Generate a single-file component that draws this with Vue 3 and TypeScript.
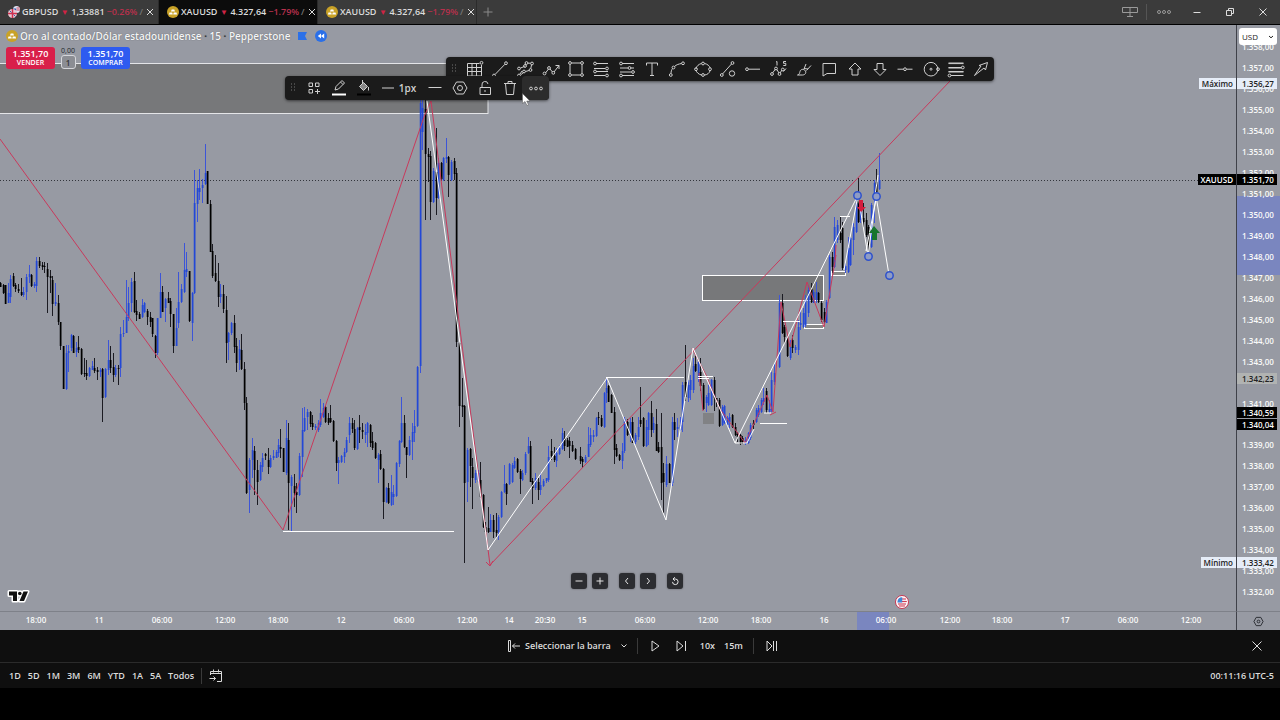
<script setup lang="ts">
interface Tab { symbol: string; price: string; change: string; kind: 'gbp' | 'gold'; active: boolean }
interface Candle { x: number; high: number; top: number; bottom: number; low: number; up: boolean }
interface Segment { x: number; y: number; rows: string }

const tabs: Tab[] = [
  { symbol: 'GBPUSD', price: '1,33881', change: '−0.26%', kind: 'gbp', active: false },
  { symbol: 'XAUUSD', price: '4.327,64', change: '−1.79%', kind: 'gold', active: true },
  { symbol: 'XAUUSD', price: '4.327,64', change: '−1.79%', kind: 'gold', active: false },
]

const ring = (x: number, y: number, r = 1.4): string =>
  `M${x - r} ${y}a${r} ${r} 0 1 0 ${2 * r} 0a${r} ${r} 0 1 0 ${-2 * r} 0`

const drawingTools: { name: string; d: string }[] = [
  { name: 'Cuadrícula', d: 'M1.5 3.5h12M1.5 7.5h14M1.5 11.5h14M1.5 16h14M1.5 3.5V16M6 3.5V16M10.5 3.5V16M15.5 5v11' + ring(15.5, 2.8) },
  { name: 'Línea de tendencia', d: 'M4 14.5L14 4.2' + ring(3, 15.5) + ring(15, 3.2) },
  { name: 'Polilínea', d: 'M4 14l2-3M4.500 8l4-1.500M9.500 5l.5-1M12 3.200h2.500M15.500 5l-.7 3.500M13 10.500l-3.500 1M7.500 12.500l-3 2.500' + ring(3, 15.5) + ring(3, 8.500) + ring(10.5, 3) + ring(16, 3.5) + ring(14.500, 10) + ring(8, 11.500) + ring(9, 6) },
  { name: 'Trayectoria', d: 'M3.500 13l3-4M8 9l2.500 3M12 12l5-6.500M13.500 5.500H17V9' + ring(2.5, 13.5) + ring(7, 8) + ring(11.300, 12.800) },
  { name: 'Rectángulo', d: 'M4.500 3h9M4.500 15h9M3 4.500v9M15 4.500v9' + ring(3, 3) + ring(15, 3) + ring(3, 15) + ring(15, 15) },
  { name: 'Retroceso de Fibonacci', d: 'M4 3.500h12M2 8.500h11M4 11.500h12M2 15.500h11' + ring(3, 3.5) + ring(15, 8.5) + ring(3, 11.5) + ring(15, 15.5) },
  { name: 'Extensión de Fibonacci', d: 'M4 3.500h12M2 8h8M13 8h3M2 12h11M4 15.500h12' + ring(3, 3.5) + ring(11.5, 8) + ring(15, 12) + ring(3, 15.5) },
  { name: 'Texto', d: 'M3.500 5.500V3h11v2.500M9 3v12.500M7 15.500h4' },
  { name: 'Curva', d: 'M3 13.500c0-2 .5-3.500 1.500-5M6.500 6.500C8.500 4.500 11 4 13.500 3.500' + ring(2.8, 15) + ring(5.5, 7.500) + ring(15, 3.300) },
  { name: 'Elipse', d: 'M1.800 9C2.500 6 5 4 7.500 3.500M10.500 3.500C13.500 4 15.500 6 16.200 8M16.200 10.500C15.500 13 13 15 10.500 15M7.500 15C5 14.500 2.500 12.500 1.800 10' + ring(9, 3.500) + ring(9, 15) + ring(2, 9.200) + ring(16, 9.200) },
  { name: 'Línea y objeto', d: 'M3.500 14L12.500 4' + ring(2.8, 15) + ring(13.500, 3) + ring(13, 13.500, 2.7) },
  { name: 'Rayo horizontal', d: 'M4.500 9.200H16' + ring(3, 9.200) },
  { name: 'Onda de Elliott', d: 'M2.500 13l3-4M6.800 9.500l2.200 3.500M10 13l2-3M13.500 11.500l2.500-3M6 2l1-.5v4M16 1.500h-2.500v1.800h2.300v2.200h-2.500' + ring(2, 14) + ring(6, 8.500) + ring(9.500, 14) + ring(12.8, 9.500) },
  { name: 'Pincel', d: 'M2.500 15c2-.5 2-2 2.500-3.500.5-2.500 4-3 5.500-.5 1 2.500-1 4-3 4zM9 9l2-5M11.500 10.500l4.500-5M9 8.500l4 .5' },
  { name: 'Nota', d: 'M3 3.500h12.500v10H7l-4 2.500z' },
  { name: 'Flecha arriba', d: 'M9 3l6 6h-3v6H6V9H3z' },
  { name: 'Flecha abajo', d: 'M9 15.500L3 9.500h3v-6h6v6h3z' },
  { name: 'Línea horizontal', d: 'M1.500 9.200h6M10.500 9.200h6' + ring(9, 9.200) },
  { name: 'Círculo', d: ring(9, 9.200, 6.800) + ring(9, 9.200, 1) + ring(16, 9.200) },
  { name: 'Niveles', d: 'M1.500 3h15M1.500 3.600h15M1.500 7.500h13M1.500 8h13M1.500 11.500h15M1.500 12h15M4 15.500h12.500' + ring(15.800, 7.500) + ring(2.500, 15.5) },
  { name: 'Flecha', d: 'M2.500 15.500L9 6l-2-.5L15.500 2.500 13.500 10l-1.500-2z' },
]

const times: [number, string][] = [
  [36, '18:00'], [99, '11'], [162, '06:00'], [225, '12:00'], [278, '18:00'], [341, '12'], [404, '06:00'],
  [467, '12:00'], [509, '14'], [545, '20:30'], [582, '15'], [645, '06:00'], [708, '12:00'], [761, '18:00'],
  [824, '16'], [886, '06:00'], [950, '12:00'], [1002, '18:00'], [1065, '17'], [1128, '06:00'], [1191, '12:00'],
]

const priceY = (p: number): number => Math.round(43 + (1357 - p) * 20.97)
const format = (p: number): string => '1.' + (p - 1000).toFixed(2).replace('.', ',')
const prices = Array.from({ length: 27 }, (_, i) => 1358 - i).filter(p => p !== 1342 && p !== 1340)
const axisTags = [
  { price: 1356.27, kind: 'light' }, { price: 1351.7, kind: 'dark' }, { price: 1342.23, kind: 'muted' },
  { price: 1340.59, kind: 'dark' }, { price: 1340.04, kind: 'dark' }, { price: 1333.42, kind: 'light' },
]
const paneTags = [
  { price: 1356.27, label: 'Máximo', kind: 'light' },
  { price: 1351.7, label: 'XAUUSD', kind: 'dark' },
  { price: 1333.42, label: 'Mínimo', kind: 'light' },
]

// Each row: x, high, body top, body bottom, low (in thirds of a unit) and b = up / k = down.
const segments: Segment[] = [
  { x: 0, y: 115, rows: `0 425 430 440 440 k,8 432 436 460 462 k,15 436 436 491 491 k,23 430 460 490 490 b,31 405 416 472 489 b,38 400 408 437 440 k,46 430 434 447 455 k,54 432 448 452 460 k,62 415 455 465 468 k,70 440 455 465 470 b,78 402 410 455 480 b,86 375 402 410 430 b,93 402 405 437 440 k,101 425 432 438 445 b,109 350 362 438 457 b,117 352 362 377 385 k,125 366 376 380 390 k,133 365 378 382 400 k,141 370 388 412 518 k,149 390 408 415 460 k,157 408 420 492 528 k,165 430 487 492 497 b,173 465 488 545 555 k,181 545 547 617 630 k,189 617 617 747 748 k,197 615 640 748 750 b,205 615 633 640 695 b,212 583 585 625 632 b,219 585 588 638 640 k,227 605 625 637 650 b,235 588 620 630 640 k,243 625 628 702 705 k,251 655 700 703 710 k,259 660 700 708 720 k,267 680 685 708 710 b,275 664 678 690 690 b,283 655 685 692 700 k,291 680 690 695 720 k,299 683 690 697 710 b,307 685 688 773 845 k,315 685 688 770 775 b,323 600 660 690 705 b,331 618 660 683 700 k,338 640 680 705 725 k,345 675 685 705 710 b,353 675 685 688 735 k,361 560 582 683 710 b,369 540 578 583 590 b,377 420 530 578 580 b,385 440 490 535 542 b,393 415 425 490 515 b,401 395 422 515 520 k,409 480 513 525 543 k,417 515 522 536 538 k,425 478 495 532 533 b,433 485 490 515 520 b,441 508 513 530 555 k,449 515 530 545 560 k,457 533 535 583 590 k,464 585 587 640 653 k,471 533 535 640 645 b,479 400 455 533 535 b,487 438 457 515 516 k,495 475 478 503 545 b,503 455 475 490 490 k,511 473 482 523 560 k,519 522 522 617 640 k,527 505 565 617 618 b,535 395 487 550 565 b,543 432 447 485 490 b,551 310 390 455 458 b,559 335 388 395 410 b,567 392 393 543 545 k,575 455 460 548 602 b,583 90 190 460 462 b,590 120 145 192 245 b,598 88 145 155 180 b,606 118 135 145 190 b,614 12 98 132 135 b,621 92 94 192 193 k,629 180 192 335 337 k,637 312 333 408 415 k,645 345 400 423 425 k,653 368 423 472 500 k,661 432 462 472 490 b,669 435 462 508 520 k,677 467 510 610 670 k,685 575 578 605 660 b,693 545 550 580 585 b,701 525 550 620 640 k,709 595 618 670 695 k,717 600 628 660 690 b,723 583 630 688 690 k,731 667 688 790 810 k,739 770 788 1060 1063 k,747 955 960 1050 1118 b,755 895 930 960 1015 b,763 918 933 990 1065 k,771 960 990 1025 1095 k,779 965 975 1020 1022 b,787 940 955 982 995 b,795 938 942 948 960 k,803 925 960 982 1002 k,811 945 955 980 985 b,819 930 948 955 960 b,827 930 935 953 955 b,834 898 915 940 950 b` },
  { x: 270, y: 65, rows: `31 1018 1070 1078 1105 k,39 1073 1075 1145 1147 k,47 990 1045 1150 1155 b,55 1000 1050 1180 1320 k,63 1155 1160 1187 1325 b,71 1152 1187 1210 1250 k,79 1180 1205 1215 1268 k,87 1090 1097 1215 1217 b,95 955 1020 1100 1160 b,103 950 985 1022 1025 b,111 958 966 982 1020 b,119 962 966 1002 1010 k,127 975 1000 1012 1020 k,135 1002 1008 1015 1020 b,143 990 1000 1020 1025 b,150 928 970 1005 1010 b,158 940 955 980 985 b,165 945 950 995 1000 k,173 970 985 998 1005 k,181 945 985 995 1000 k,189 990 992 1053 1055 k,197 1050 1052 1118 1143 k,205 1100 1110 1118 1182 b,213 1095 1098 1115 1118 b,221 1075 1085 1100 1118 b,229 1040 1050 1085 1090 b,237 980 998 1035 1060 b,245 985 998 1018 1030 k,253 990 1018 1075 1080 k,260 1010 1015 1077 1080 b,268 975 1012 1020 1060 k,276 1000 1020 1025 1048 k,284 1003 1025 1035 1060 b,291 995 998 1030 1070 b,299 1003 1005 1060 1072 k,307 1025 1053 1075 1080 k,315 1055 1060 1105 1107 k,323 1090 1095 1110 1180 b,331 1080 1092 1138 1140 k,339 1135 1137 1237 1288 k,347 1190 1193 1237 1240 b,355 1180 1193 1240 1243 k,363 1155 1205 1245 1247 b,370 1185 1212 1220 1245 b,379 1117 1120 1218 1220 b,387 1050 1053 1122 1130 b,394 920 998 1055 1060 b,401 975 1000 1072 1075 k,409 1070 1072 1095 1165 k,417 1038 1050 1095 1098 b,425 998 1025 1055 1110 b,433 960 1007 1030 1055 b,441 828 832 1008 1010 b,449 30 40 828 850 b,457 25 55 125 180 b,465 30 57 193 390 k,473 175 192 200 275 k,481 183 197 335 390 k,489 235 242 337 340 b,497 115 245 325 375 k,505 205 218 325 327 b,513 215 220 268 270 k,519 200 205 270 272 b,527 145 200 208 220 b,535 197 200 255 320 k,543 210 215 270 272 b,551 205 213 253 270 k,559 235 250 755 770 k,567 757 758 948 1010 k,575 863 945 950 980 k,583 945 948 1180 1420 k,591 1075 1080 1175 1235 b,599 1075 1078 1128 1190 k,607 1105 1130 1165 1258 k,615 1140 1150 1170 1180 b,623 1140 1148 1175 1180 b,631 1115 1170 1220 1225 k,639 1212 1216 1310 1313 k,645 1295 1312 1325 1328 k,653 1250 1315 1325 1328 k,661 1272 1290 1325 1327 b,669 1275 1290 1325 1345 k,677 1270 1320 1328 1345 k,685 1275 1280 1325 1350 b` },
  { x: 480, y: 305, rows: `63 483 485 562 565 b,71 405 462 487 490 b,79 460 462 492 525 k,87 400 403 462 465 b,95 400 405 455 460 b,103 382 393 415 418 b,111 385 388 427 430 k,119 418 422 448 492 k,127 420 430 450 452 b,135 367 372 428 435 b,143 322 348 370 372 b,149 333 348 455 455 k,157 445 452 475 522 k,165 430 445 475 480 b,173 443 457 480 510 k,181 430 465 480 495 b,189 448 452 468 470 b,197 443 445 452 460 b,205 348 380 450 455 b,213 327 362 378 390 k,221 350 378 390 395 k,229 355 370 392 410 b,237 345 355 372 375 b,245 295 310 358 360 b,253 303 325 348 362 k,261 325 330 350 352 k,268 320 332 348 385 k,276 333 345 362 365 k,284 355 357 388 390 k,299 352 378 392 403 k,307 380 388 397 413 k,315 375 380 397 400 b,323 290 342 380 382 b,331 295 315 345 350 b,339 300 315 322 335 b,347 260 265 318 322 b,355 247 260 265 285 k,363 255 265 288 292 k,371 185 190 290 293 b,379 145 175 190 218 b,385 165 168 215 217 k,393 193 195 248 250 k,401 232 247 360 402 k,409 343 355 378 380 k,417 373 376 390 392 k,425 340 362 392 417 b,433 262 267 362 370 b,441 268 275 315 318 k,449 265 275 315 335 b,457 262 275 338 340 k,465 310 315 337 342 b,473 262 290 320 330 b,481 170 270 282 290 k,489 260 263 348 350 k,497 270 290 348 350 b,505 247 250 300 345 b,512 213 250 300 320 k,519 260 280 300 310 b,527 238 282 362 363 k,535 335 350 365 368 k,543 248 350 458 510 k,550 400 430 455 550 k,559 378 403 465 472 b,567 400 402 458 460 k,575 262 275 458 468 b,583 248 275 300 330 k,591 263 290 297 320 b,599 262 285 300 303 b,607 155 165 275 305 b,615 45 157 200 212 k,623 150 165 205 215 b,631 135 150 180 210 b,638 83 108 180 190 b,646 78 102 122 125 k,654 90 95 145 155 b,661 85 125 168 182 k,669 160 165 238 240 k,677 195 200 220 247 b,685 165 190 225 228 b,693 148 150 225 228 b,701 140 150 205 243 k,709 203 205 212 232 k,716 205 210 287 290 k,725 225 230 285 287 b,732 225 228 280 283 b,740 258 265 285 290 b,748 250 260 275 295 b,756 253 255 292 295 k,764 280 292 315 318 k,771 305 312 320 335 k,779 312 315 342 345 k,787 318 325 335 342 k,795 320 330 343 345 b,803 305 310 340 343 b,811 280 285 325 330 b,819 270 278 285 300 k,827 233 240 275 278 b,835 225 235 255 260 b,843 203 210 245 248 b,850 175 205 215 225 b,858 175 182 240 250 k,866 210 237 245 250 b,874 125 150 240 245 b,882 100 130 155 165 b` },
  { x: 690, y: 115, rows: `267 465 490 680 685 b,275 463 490 580 582 k,283 555 560 590 612 k,291 585 600 648 650 k,299 600 620 655 660 b,307 585 600 625 640 k,315 615 622 630 640 b,323 540 560 630 645 b,331 510 550 555 570 b,338 505 520 560 565 b,346 465 480 555 560 b,354 435 450 520 530 b,362 430 447 487 490 k,370 450 455 488 490 b,378 425 455 480 488 b,385 455 460 485 488 k,393 483 488 540 545 k,401 505 517 545 550 k,409 480 485 548 550 b,417 345 350 475 478 b,425 335 350 380 400 k,433 230 260 380 385 b,441 240 255 300 310 b,449 230 280 300 310 k,457 245 265 385 390 k,465 370 378 390 400 b,473 290 325 395 400 b,481 290 295 375 378 b,489 250 262 300 345 b,497 175 190 275 278 b,503 115 175 245 248 k,511 180 210 240 250 b,519 190 235 245 260 k,527 220 240 285 290 k,535 255 260 315 345 k,543 190 195 320 325 b,551 120 130 180 250 b,559 88 125 155 180 k,567 40 120 147 150 b` },
]

const candles: Candle[] = segments.flatMap(s =>
  s.rows.split(',').map(row => {
    const f = row.split(' ')
    const at = (i: number) => s.y + Math.round(Number(f[i]) / 3)
    return { x: s.x + Number(f[0]) / 3, high: at(1), top: at(2), bottom: at(3), low: at(4), up: f[5] === 'b' }
  }),
)
const wicks = (up: boolean): string =>
  candles.filter(c => c.up === up).map(c => `M${Math.round(c.x) + 0.5} ${c.high}V${c.low}`).join('')
const bodies = (up: boolean): string =>
  candles.filter(c => c.up === up).map(c => `M${Math.round(c.x) - 0.25} ${c.top}h1.750V${Math.max(c.bottom, c.top + 1)}h-1.750z`).join('')

const handles: [number, number][] = [[857, 170], [868, 231], [876, 171], [889, 250]]
const ranges = ['1D', '5D', '1M', '3M', '6M', 'YTD', '1A', '5A', 'Todos']
</script>

<template>
  <div class="app">
    <header class="tabbar">
      <div v-for="(t, i) in tabs" :key="i" class="tab" :class="{ active: t.active }">
        <svg v-if="t.kind === 'gold'" class="coin" viewBox="0 0 12 12"><circle cx="6" cy="6" r="6" fill="#c9a227" /><path d="M4.700 3.500h2.600l.7 2H4zM2.500 6.500h2.700l.6 2H1.900zM6.800 6.500h2.700l.6 2H6.200z" fill="#fff" /></svg>
        <svg v-else class="coin" viewBox="0 0 12 12"><circle cx="8.500" cy="3.500" r="3.500" fill="#dfe3f2" /><path d="M5.200 2.500h3v3h-3z" fill="#2f56b0" /><path d="M8.500 2h3M8.500 4h3.500" stroke="#d04860" /><circle cx="4.500" cy="7.500" r="4.500" fill="#e9c9d2" /><path d="M0 7.500h9M4.500 3v9" stroke="#d0304f" stroke-width="1.500" /><path d="M1.500 4.500l2 2M7.500 10.500l-2-2" stroke="#3c5aa6" /></svg>
        <b>{{ t.symbol }}</b>
        <span class="down">▼</span>
        <span class="price">{{ t.price }}</span>
        <span class="change">{{ t.change }}</span>
        <span class="cut">/</span>
        <button class="close" aria-label="Cerrar pestaña"><svg viewBox="0 0 8 8"><path d="M1 1l6 6M7 1L1 7" /></svg></button>
      </div>
      <button class="plus" aria-label="Nueva pestaña"><svg viewBox="0 0 10 10"><path d="M5 .5v9M.5 5h9" /></svg></button>
      <div class="window">
        <button aria-label="Diseño"><svg width="16" height="12" viewBox="0 0 16 12"><path d="M.5 1.500h15v5H.5zM8 1.500v9M5 10.500h6" /></svg></button>
        <i></i>
        <button aria-label="Más"><svg width="14" height="8" viewBox="0 0 14 8"><path :d="ring(2, 4, 1.500) + ring(7, 4, 1.500) + ring(12, 4, 1.500)" /></svg></button>
        <button class="bright" aria-label="Minimizar"><svg width="8" height="8" viewBox="0 0 8 8"><path d="M.5 4.500h7" /></svg></button>
        <button class="bright" aria-label="Restaurar"><svg width="8" height="8" viewBox="0 0 8 8"><path d="M.5 2.500h5v5h-5zM2.500 2.500v-2h5v5h-2" /></svg></button>
        <button class="bright" aria-label="Cerrar"><svg width="8" height="8" viewBox="0 0 8 8"><path d="M.5.5l7 7M7.500.5l-7 7" /></svg></button>
      </div>
    </header>

    <main class="chart">
      <section class="pane">
        <svg class="plot" aria-label="XAUUSD 15 minutos">
          <rect x="-2" y="38.500" width="490" height="50" fill="#77787a" stroke="#e4e5e8" />
          <rect x="702.500" y="250.500" width="121" height="25" fill="#77787a" stroke="#fff" />
          <rect x="703" y="388" width="11" height="11" fill="#818285" />
          <rect x="804.500" y="299.500" width="19" height="4" fill="#888" stroke="#fff" />
          <rect x="831.500" y="246.500" width="14" height="4" fill="#888" stroke="#fff" />
          <line class="last" x1="0" x2="100%" y1="155.500" y2="155.500" />
          <g fill="none" class="candle">
            <path :d="wicks(true)" stroke="#3d55d8" /><path :d="bodies(true)" fill="#2348d6" />
            <path :d="wicks(false)" stroke="#1b1b22" /><path :d="bodies(false)" fill="#000" />
          </g>
          <g fill="none" stroke="#c83a5c">
            <path d="M0 114L283 505 424 92 431 76 490 540 950 56" />
            <path d="M486 537l4 4 3-5M692 323l14 27 14 34 25 34 22-48 6 17 8-110 9 45 17-65 17 45 12-72M835 235l1-15M699 348l4 38M770 390l6-3" />
          </g>
          <g fill="none" stroke="#fff">
            <path d="M283 506.500H454M606 352.500h78M698 351.500h15M698 353.500h11M760 398.500h27M783 296.500h17M840 191.500h10M764 388h7" />
            <path d="M427 76L488 525 607 353 666 495 693 323 735 418 858 170 868 231 876 171 889 250M735 418l12 0 7-14M844 245l14-75M866 226l10-52M878 150l-3 21" />
          </g>
          <path d="M859 175h4v7h3l-5 5-4-5h2z" fill="#d51d3d" />
          <path d="M872 215v-7h-3l5-7 6 7h-3v7z" fill="#17752d" />
          <circle v-for="(h, i) in handles" :key="i" :cx="h[0] + 0.5" :cy="h[1] + 0.5" r="3.700" class="handle" />
          <g transform="translate(902 577)"><circle r="6.500" fill="#fff" stroke="#c73450" /><circle r="4.800" fill="#f6e6ea" /><path d="M0-3h4M0-.5h4.800M-4 2H4M-3 4h6" stroke="#cf3b52" /><path d="M-4.500-.2a4.800 4.800 0 0 1 4.700-4.500V.5h-4.700z" fill="#3f86d6" /></g>
        </svg>

        <div class="legend">
          <div class="title">
            <svg class="coin" viewBox="0 0 12 12"><circle cx="6" cy="6" r="6" fill="#c9a227" /><path d="M4.700 3.500h2.600l.7 2H4zM2.500 6.500h2.700l.6 2H1.900zM6.800 6.500h2.700l.6 2H6.200z" fill="#fff" /></svg>
            <h1>Oro al contado/Dólar estadounidense <em>·</em> 15 <em>·</em> Pepperstone</h1>
            <svg class="flag" viewBox="0 0 9 8"><path d="M0 0h9L7 4l2 4H0z" fill="#2b70e8" /></svg>
            <svg class="rewind" viewBox="0 0 12 12"><circle cx="6" cy="6" r="6" fill="#2b70e8" /><path d="M6 3.500v5L2.800 6zM9.200 3.500v5L6 6z" fill="#fff" /></svg>
          </div>
          <div class="trade">
            <button class="sell"><span>1.351,70</span><small>VENDER</small></button>
            <div class="qty"><label for="lots">0,00</label><input id="lots" value="1" /></div>
            <button class="buy"><span>1.351,70</span><small>COMPRAR</small></button>
          </div>
        </div>

        <div class="toolbar draw">
          <svg class="grip" viewBox="0 0 6 10"><path d="M1 1h1M4 1h1M1 4h1M4 4h1M1 7h1M4 7h1" /></svg>
          <button v-for="t in drawingTools" :key="t.name" :aria-label="t.name"><svg viewBox="0 0 18 18"><path :d="t.d" /></svg></button>
        </div>

        <div class="toolbar edit">
          <svg class="grip" viewBox="0 0 6 10"><path d="M1 1h1M4 1h1M1 4h1M4 4h1M1 7h1M4 7h1" /></svg>
          <button aria-label="Plantillas"><svg viewBox="0 0 18 18"><path d="M4 4h3.500v3.500H4zM10.500 4H14v3.500h-3.500zM4 10.500h3.500V14H4zM12.500 10v5M10 12.500h5" /></svg></button>
          <button aria-label="Color de línea"><svg viewBox="0 0 18 18"><path d="M5 11l1-3.500 6-6 2.500 2.500-6 6zM10.500 3l2.500 2.500" /><path d="M2 15.500h14" stroke="#fff" stroke-width="2" /></svg></button>
          <button aria-label="Color de fondo"><svg viewBox="0 0 18 18"><path d="M4.500 7.500l4-4 4 4-4 4z" fill="#888" /><path d="M7.500 1v4M13.500 8v3.500" /><path d="M2 15.500h14" stroke="#000" stroke-width="2" /></svg></button>
          <button class="width"><svg viewBox="0 0 12 18"><path d="M0 9h12" /></svg>1px</button>
          <button aria-label="Estilo de línea"><svg viewBox="0 0 18 18"><path d="M2.500 8.500h13" /></svg></button>
          <button aria-label="Ajustes"><svg viewBox="0 0 18 18"><path :d="'M5.500 3h7l3.500 6-3.500 6h-7L2 9z' + ring(9, 9, 2.500)" /></svg></button>
          <button aria-label="Bloquear"><svg viewBox="0 0 18 18"><path d="M4 8.500h10.500v7H4zM6 8.500V6a3 3 0 0 1 6-1M9 11v2" /></svg></button>
          <button aria-label="Eliminar"><svg viewBox="0 0 18 18"><path d="M3 4.500h12M7 4.500v-2h4v2M4.500 4.500l1 11h7l1-11" /></svg></button>
          <button class="hover" aria-label="Más opciones"><svg viewBox="0 0 18 18"><path :d="ring(4, 9.500) + ring(9, 9.500) + ring(14, 9.500)" /></svg></button>
        </div>
        <svg class="cursor" viewBox="0 0 9 13"><path d="M.5.5v10l2.500-2 2 4 1.500-.7-1.800-3.800h3.300z" fill="#fff" stroke="#555" stroke-width=".5" /></svg>

        <div v-for="t in paneTags" :key="t.label" class="panetag" :class="t.kind" :style="{ top: priceY(t.price) + 'px' }">{{ t.label }}</div>

        <svg class="brand" viewBox="0 0 24 15" aria-label="TradingView">
          <g stroke="#fff" stroke-width="3" stroke-linejoin="round"><path d="M3 2.500h8v9.500H7V6.500H3zM17.500 2.500H22L18 12h-4.500z" /><circle cx="13.800" cy="4.500" r="1.800" /></g>
          <g fill="#111"><path d="M3 2.500h8v9.500H7V6.500H3zM17.500 2.500H22L18 12h-4.500z" /><circle cx="13.800" cy="4.500" r="1.800" /></g>
        </svg>

        <nav class="zoomer">
          <button aria-label="Alejar"><svg viewBox="0 0 10 10"><path d="M1.500 5h7" /></svg></button>
          <button class="wide" aria-label="Acercar"><svg viewBox="0 0 10 10"><path d="M1.500 5h7M5 1.500v7" /></svg></button>
          <button aria-label="Izquierda"><svg viewBox="0 0 10 10"><path d="M6 2L3.500 5 6 8" /></svg></button>
          <button class="wide" aria-label="Derecha"><svg viewBox="0 0 10 10"><path d="M4 2l2.500 3L4 8" /></svg></button>
          <button aria-label="Restablecer"><svg viewBox="0 0 10 10"><path d="M3 3h2.300a2.800 2.800 0 1 1-2.800 2.900M4.800 1.200L3 3l1.800 1.800" /></svg></button>
        </nav>
      </section>

      <aside class="prices">
        <div class="currency">
          <select aria-label="Moneda"><option>USD</option></select>
          <svg viewBox="0 0 6 4"><path d="M1 1l2 1.800L5 1" fill="none" stroke="#222" /></svg>
        </div>
        <svg class="plot">
          <rect y="171" width="100%" height="79" fill="#7a86bf" />
          <text v-for="p in prices" :key="p" x="21" :y="priceY(p) + 3">{{ format(p) }}</text>
          <g v-for="t in axisTags" :key="t.price" :class="t.kind">
            <rect x="0" :y="priceY(t.price) - 5" width="40" height="11" /><text x="21" :y="priceY(t.price) + 4">{{ format(t.price) }}</text>
          </g>
        </svg>
      </aside>

      <div class="times">
        <svg class="plot">
          <rect x="857" width="32" height="100%" fill="#7a86bf" />
          <text v-for="t in times" :key="t[0]" :x="t[0]" y="11">{{ t[1] }}</text>
        </svg>
      </div>
      <button class="gear" aria-label="Ajustes de escala"><svg viewBox="0 0 12 12"><path :d="'M3.500 1.500h5L11 6l-2.500 4.500h-5L1 6z' + ring(6, 6, 1.500)" /></svg></button>
    </main>

    <section class="replay">
      <div class="controls">
        <button class="pick">
          <svg width="12" height="12" viewBox="0 0 12 12"><path d="M.5.5h2v11h-2zM4.500 6H12M7 3.500L4.500 6 7 8.500" /></svg>
          <span>Seleccionar la barra</span>
          <svg width="6" height="4" viewBox="0 0 6 4"><path d="M.5.5L3 3 5.500.5" /></svg>
        </button>
        <i></i>
        <button class="play" aria-label="Reproducir"><svg width="9" height="12" viewBox="0 0 9 12"><path d="M1 1l7 5-7 5z" /></svg></button>
        <button class="step" aria-label="Avanzar"><svg width="10" height="12" viewBox="0 0 10 12"><path d="M1 1l6 5-6 5zM9.500 1v10" /></svg></button>
        <button class="speed">10x</button>
        <button class="interval">15m</button>
        <i></i>
        <button class="live" aria-label="Ir al tiempo real"><svg width="11" height="12" viewBox="0 0 11 12"><path d="M1 1l5 5-5 5zM7.500 1v10M10.500 1v10" /></svg></button>
      </div>
      <button class="quit" aria-label="Salir"><svg width="10" height="10" viewBox="0 0 10 10"><path d="M.5.5l9 9M9.500.5l-9 9" /></svg></button>
    </section>

    <footer class="ranges">
      <button v-for="r in ranges" :key="r">{{ r }}</button>
      <i></i>
      <button aria-label="Ir a la fecha"><svg width="14" height="14" viewBox="0 0 14 14"><path d="M1.500 6V2.500h11v10H8M1.500 4.500h11M4.500.5v3M9.500.5v3M.5 9.500h6M4.500 7.500l2 2-2 2" /></svg></button>
      <time>00:11:16 UTC-5</time>
    </footer>
  </div>
</template>

<style>
body { background: #000; }
</style>

<style scoped>
.app { display: flex; flex-direction: column; height: 100vh; min-height: 480px; padding-bottom: 32px; box-sizing: border-box; background: #000; color: #dcdcdc; font: 600 9px/12px "Open Sans", "Noto Sans", sans-serif; overflow: hidden; }
button { display: flex; align-items: center; justify-content: center; padding: 0; border: 0; background: none; color: inherit; font: inherit; }
svg { display: block; flex: none; }
button svg path:not([fill]) { fill: none; }
button svg path:not([stroke]) { stroke: currentColor; stroke-width: 1; }

.tabbar { display: flex; align-items: center; flex: none; height: 25px; box-sizing: border-box; border-bottom: 1px solid #000; background: #3b3b3b; }
.tab { display: flex; align-items: center; width: 159px; height: 24px; box-sizing: border-box; padding: 0 1px 0 8px; border-right: 1px solid #2b2b2b; white-space: nowrap; }
.tab.active { background: #0c0c0c; }
.tab > * { flex: none; }
.coin { width: 12px; height: 12px; }
.tab b { margin-left: 2px; font-weight: 600; }
.down { width: 13px; color: #cf2445; font-size: 8px; text-align: center; }
.change { margin-left: 2px; color: #b8304c; }
.cut { margin-left: 2px; color: #777; }
.tab .close { width: 14px; height: 16px; margin-left: auto; }
.close svg { width: 8px; height: 8px; }
.plus { width: 22px; height: 20px; color: #8a8a8a; }
.plus svg { width: 10px; height: 10px; }
.window { display: flex; align-items: center; margin-left: auto; padding-right: 1px; color: #9a9a9a; }
.window button { width: 33px; height: 20px; }
.window i { width: 1px; height: 16px; background: #555; }
.window .bright { color: #ddd; }

.chart { flex: 1; min-height: 0; display: grid; grid-template: minmax(0, 1fr) 19px / minmax(0, 1fr) 44px; background: #979aa3; }
.pane { position: relative; overflow: hidden; }
.plot { width: 100%; height: 100%; }
.last { stroke: #33353c; stroke-dasharray: 1 2; }
.candle path { stroke-width: 1; }
.handle { fill: #8f9cc4; stroke: #2e51cc; stroke-width: 1.500; }
.legend { position: absolute; top: 5px; left: 6px; color: #f4f5f7; }
.title { display: flex; align-items: center; height: 12px; }
h1 { margin: 0 8px 0 2px; font-size: 10px; font-weight: 600; line-height: 12px; white-space: nowrap; text-shadow: 0 0 1px #555; }
h1 em { color: #333; font-style: normal; }
.flag { width: 9px; height: 8px; }
.rewind { width: 12px; height: 12px; margin-left: 8px; }
.trade { display: flex; gap: 5px; margin-top: 5px; }
.trade button { flex-direction: column; width: 49px; height: 22px; border-radius: 3px; color: #fff; line-height: 9px; }
.trade small { font-size: 7px; line-height: 9px; }
.sell { background: #d91f4a; }
.buy { background: #2e5bf0; }
.qty { display: flex; flex-direction: column; align-items: center; width: 16px; color: #22242a; }
.qty label { font-size: 7px; font-weight: 400; line-height: 8px; }
.qty input { width: 15px; height: 14px; box-sizing: border-box; padding: 0; border: 1px solid #d5d6da; border-radius: 3px; background: #8b8d93; color: #333; font: inherit; font-size: 8px; text-align: center; }

.toolbar { position: absolute; display: flex; align-items: center; height: 24px; border-radius: 4px; background: #1b1b1b; color: #cfcfcf; box-shadow: 0 1px 3px #0008; }
.toolbar svg { width: 18px; height: 18px; }
.toolbar .grip { width: 6px; height: 10px; stroke: #777; }
.draw { top: 32px; left: 446px; box-sizing: border-box; width: 548px; padding: 0 0 0 5px; }
.draw button { flex: 1; height: 24px; }
.draw .grip { margin-right: 5px; }
.edit { top: 51px; left: 285px; padding-left: 5px; }
.edit .grip { margin-right: 5px; }
.edit button { width: 25px; height: 24px; }
.edit .width { width: 46px; gap: 5px; font-size: 10px; }
.edit .width svg { width: 12px; }
.edit .hover { width: 27px; background: #2c2c2c; border-radius: 4px; }
.cursor { position: absolute; top: 68px; left: 522px; width: 9px; height: 13px; }
.panetag { position: absolute; right: 0; height: 11px; margin-top: -5px; padding: 0 3px; font-size: 8px; line-height: 11px; }
.panetag.light { background: #e6edf8; color: #222; }
.panetag.dark { background: #000; color: #fff; }
.brand { position: absolute; bottom: 7px; left: 6px; width: 24px; height: 15px; }
.zoomer { position: absolute; bottom: 22px; left: 0; right: 0; display: flex; justify-content: center; gap: 5px; padding-left: 18px; }
.zoomer button { width: 16px; height: 16px; border-radius: 3px; background: #2c2d31; color: #e6e6e6; box-shadow: 0 0 2px #0006; }
.zoomer .wide { margin-right: 6px; }
.zoomer svg { width: 10px; height: 10px; }

.prices { position: relative; min-height: 0; overflow: hidden; border-left: 1px solid #3f4149; }
.currency { position: absolute; top: 3px; left: 2px; width: 38px; height: 17px; }
.currency select { appearance: none; width: 100%; height: 100%; padding: 0 0 0 3px; border: 0; border-radius: 3px; background: #fff; color: #222; font: 400 8px "Open Sans", sans-serif; }
.currency svg { position: absolute; top: 7px; right: 3px; width: 6px; height: 4px; pointer-events: none; }
.plot text { fill: #fafafa; font-size: 8px; font-weight: 600; text-anchor: middle; }
.light rect { fill: #e6edf8; }
.plot .light text { fill: #222; }
.dark rect { fill: #000; }
.muted rect { fill: #b1b3b2; }
.plot .muted text { fill: #222; }
.times { min-width: 0; border-top: 1px solid #7e8189; overflow: hidden; }
.gear { border-top: 1px solid #7e8189; border-left: 1px solid #3f4149; color: #26282e; }
.gear svg { width: 11px; height: 11px; }

.replay { position: relative; display: flex; align-items: center; justify-content: center; flex: none; height: 33px; box-sizing: border-box; border-bottom: 1px solid #2b2b2b; background: #0f0f0f; }
.controls { display: flex; align-items: center; height: 20px; padding-left: 8px; }
.pick { gap: 5px; }
.pick svg:last-child { margin-left: 5px; }
.replay i, .ranges i { width: 1px; height: 16px; background: #3a3a3a; }
.controls i { margin: 0 10px; }
.play { width: 16px; }
.step { width: 20px; margin-left: 7px; }
.speed { margin-left: 9px; }
.interval { margin-left: 9px; }
.live { width: 16px; }
.quit { position: absolute; right: 18px; }
.ranges { display: flex; align-items: center; flex: none; height: 25px; gap: 7px; padding: 0 6px 0 9px; background: #0f0f0f; }
.ranges time { margin-left: auto; }
</style>
